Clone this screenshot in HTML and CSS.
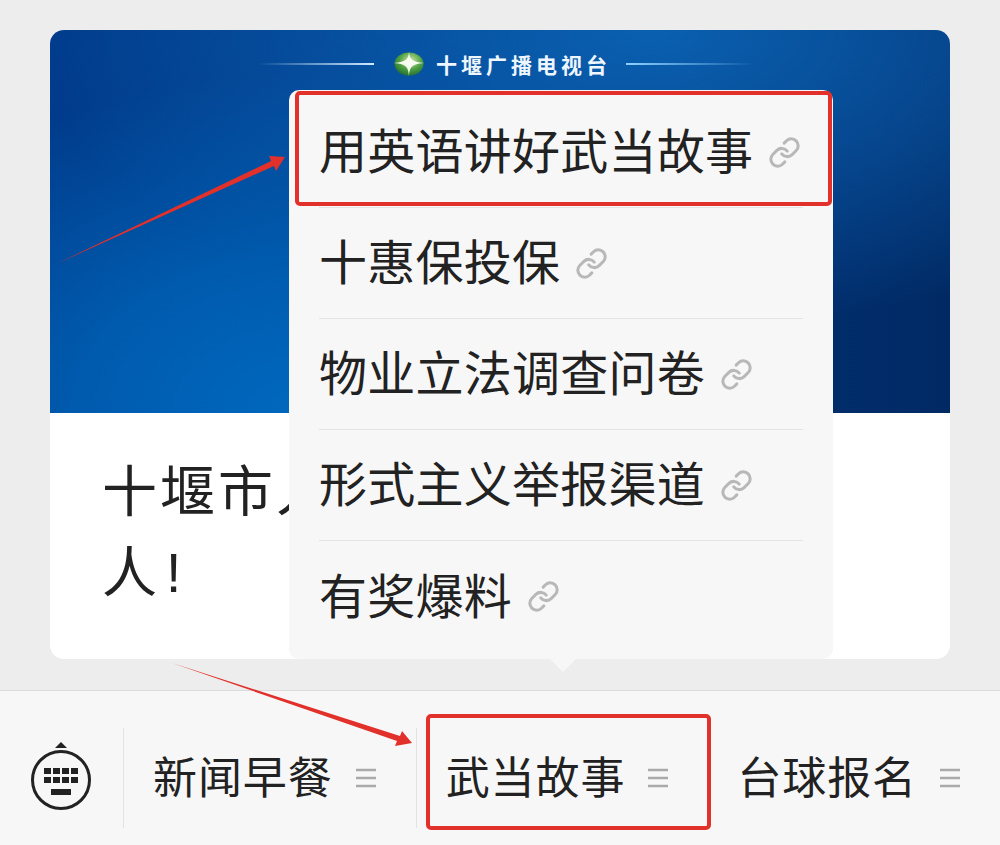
FILE: index.html
```html
<!DOCTYPE html>
<html lang="zh">
<head>
  <meta charset="UTF-8">
  <title>十堰广播电视台</title>
  <link rel="stylesheet" href="styles.css">
</head>
<body>
  <svg width="0" height="0" class="defs">
    <defs>
      <radialGradient id="ball" cx="55%" cy="35%" r="70%">
        <stop offset="0%" stop-color="#cfe8a8"/>
        <stop offset="55%" stop-color="#4fa043"/>
        <stop offset="100%" stop-color="#1f6a2e"/>
      </radialGradient>
    </defs>
    <symbol id="link" viewBox="0 0 24 24">
      <path d="M10 13a5 5 0 0 0 7.54.54l3-3a5 5 0 0 0-7.07-7.07l-1.72 1.71"/>
      <path d="M14 11a5 5 0 0 0-7.54-.54l-3 3a5 5 0 0 0 7.07 7.07l1.71-1.71"/>
    </symbol>
    <symbol id="grip" viewBox="0 0 20 20">
      <path d="M0 2h20M0 10h20M0 18h20"/>
    </symbol>
  </svg>

  <div class="content">
    <div class="card">
      <div class="banner">
        <div class="banner-head">
          <span class="line line-left"></span>
          <svg class="logo" width="30" height="24" viewBox="0 0 30 24">
            <ellipse cx="15" cy="12" rx="14.5" ry="11.5" fill="url(#ball)"/>
            <path d="M15 0c.8 7 2.5 9.8 15 11c-12.500 1.200-14.200 4-15 13c-.8-9-2.500-11.800-15-13c12.500-1.200 14.200-4 15-11z" fill="#f8fbf0"/>
          </svg>
          <span class="banner-title">十堰广播电视台</span>
          <span class="line line-right"></span>
        </div>
      </div>
      <h1 class="title">十堰市人<br>人<span class="bang">!</span></h1>

      <ul class="popup">
        <li><span>用英语讲好武当故事</span><svg class="link-icon"><use href="#link"/></svg></li>
        <li><span>十惠保投保</span><svg class="link-icon"><use href="#link"/></svg></li>
        <li><span>物业立法调查问卷</span><svg class="link-icon"><use href="#link"/></svg></li>
        <li><span>形式主义举报渠道</span><svg class="link-icon"><use href="#link"/></svg></li>
        <li><span>有奖爆料</span><svg class="link-icon"><use href="#link"/></svg></li>
      </ul>
    </div>
  </div>

  <div class="tabbar">
    <div class="keyboard">
      <svg width="64" height="72" viewBox="0 0 64 72">
        <path d="M32 0l6 6h-12z" fill="#222"/>
        <circle cx="32" cy="38" r="28.500" fill="none" stroke="#222" stroke-width="3"/>
        <g fill="#222">
          <rect x="15" y="26" width="7" height="6"/><rect x="24" y="26" width="7" height="6"/>
          <rect x="33" y="26" width="7" height="6"/><rect x="42" y="26" width="7" height="6"/>
          <rect x="15" y="35" width="7" height="6"/><rect x="24" y="35" width="7" height="6"/>
          <rect x="33" y="35" width="7" height="6"/><rect x="42" y="35" width="7" height="6"/>
          <rect x="22" y="47" width="20" height="6"/>
        </g>
      </svg>
    </div>
    <div class="tab"><span>新闻早餐</span><svg class="grip"><use href="#grip"/></svg></div>
    <div class="tab"><span>武当故事</span><svg class="grip"><use href="#grip"/></svg></div>
    <div class="tab"><span>台球报名</span><svg class="grip"><use href="#grip"/></svg></div>
  </div>

  <!-- red markup drawn over the screenshot -->
  <div class="mark mark-menu"></div>
  <div class="mark mark-tab"></div>
  <svg class="arrows" width="1000" height="845" viewBox="0 0 1000 845">
    <path d="M56 264L271 161L269 156L285 157L276 171L274 166z" fill="#e2302a"/>
    <path d="M172 663L400 736L402 731L412 743L395 746L397 741z" fill="#e2302a"/>
  </svg>
</body>
</html>
```

FILE: styles.css
```css
* {
  margin: 0;
  padding: 0;
  box-sizing: border-box;
}

body {
  position: relative;
  display: flex;
  flex-direction: column;
  height: 845px;
  overflow: hidden;
  background-color: #ededed;
  font-family: "Liberation Sans", "Noto Sans CJK SC", sans-serif;
  color: #222;
}

.defs {
  position: absolute;
}

/* Article card */
.content {
  flex: 1;
  padding: 30px 50px 31px;
}

.card {
  position: relative;
  height: 629px;
  border-radius: 14px;
  background-color: #fff;
}

.banner {
  height: 383px;
  border-radius: 14px 14px 0 0;
  background:
    radial-gradient(ellipse 520px 340px at 260px 383px, #0069bf 0%, rgba(0, 98, 182, 0.8) 45%, rgba(1, 70, 150, 0) 100%),
    radial-gradient(ellipse 620px 300px at 600px 0, #0a60b0 0%, rgba(10, 90, 170, 0.6) 50%, rgba(10, 80, 150, 0) 100%),
    linear-gradient(90deg, #013b8b 0%, #01408f 50%, #012e6e 82%, #012a64 100%);
}

.banner-head {
  display: flex;
  align-items: center;
  height: 68px;
  padding-left: 208px;
  color: #eef6ff;
}

.line {
  height: 2px;
}

.line-left {
  width: 116px;
  margin-right: 20px;
  background: linear-gradient(90deg, rgba(150, 210, 255, 0), #cfeaff);
}

.line-right {
  width: 128px;
  margin-left: 15px;
  background: linear-gradient(90deg, #8fd0ff, rgba(150, 210, 255, 0));
}

.logo {
  margin-right: 12px;
}

.banner-title {
  font-size: 21px;
  font-weight: 700;
  letter-spacing: 4px;
  font-family: "Noto Sans CJK SC", sans-serif;
}

.title {
  padding: 39px 52px;
  font-size: 55px;
  font-weight: 400;
  line-height: 81px;
  letter-spacing: 3px;
}

.bang {
  margin-left: 6px;
}

/* Popup menu */
.popup {
  position: absolute;
  left: 239px;
  top: 60px;
  width: 544px;
  height: 569px;
  padding: 7px 30px 0;
  border-radius: 10px;
  list-style: none;
  background-color: #f7f7f7;
}

.popup::after {
  content: "";
  position: absolute;
  left: 261px;
  bottom: -13px;
  border-left: 13px solid transparent;
  border-right: 13px solid transparent;
  border-top: 13px solid #f7f7f7;
}

.popup li {
  display: flex;
  align-items: center;
  gap: 15px;
  height: 111px;
  font-size: 48px;
  letter-spacing: 0.25px;
  white-space: nowrap;
  border-bottom: 1px solid #e4e4e4;
}

.popup li span {
  padding-bottom: 8px;
}

.popup li:last-child {
  border-bottom: none;
}

.link-icon {
  flex-shrink: 0;
  width: 33px;
  height: 33px;
  fill: none;
  stroke: #b8b8b8;
  stroke-width: 2.2;
  stroke-linecap: round;
}

/* Bottom menu bar */
.tabbar {
  display: flex;
  align-items: center;
  height: 155px;
  padding-top: 20px;
  border-top: 1px solid #dcdcdc;
  background-color: #f7f7f7;
}

.keyboard {
  display: flex;
  align-items: center;
  justify-content: center;
  width: 123px;
  height: 100px;
  padding-right: 2px;
}

.tab {
  flex: 1;
  display: flex;
  align-items: center;
  justify-content: center;
  gap: 23px;
  height: 100px;
  padding-right: 11px;
  font-size: 44px;
  letter-spacing: 0.9px;
  border-left: 1px solid #e2e2e2;
}

.tab span {
  padding-bottom: 6px;
}

.tab:last-child {
  border-left: none;
}

.grip {
  width: 20px;
  height: 20px;
  fill: none;
  stroke: #aaa;
  stroke-width: 2.500;
}

/* Annotations */
.mark {
  position: absolute;
  border: 4px solid #e2302a;
  border-radius: 5px;
}

.mark-menu {
  left: 295px;
  top: 91px;
  width: 537px;
  height: 115px;
}

.mark-tab {
  left: 426px;
  top: 714px;
  width: 285px;
  height: 116px;
}

.arrows {
  position: absolute;
  left: 0;
  top: 0;
}
```
